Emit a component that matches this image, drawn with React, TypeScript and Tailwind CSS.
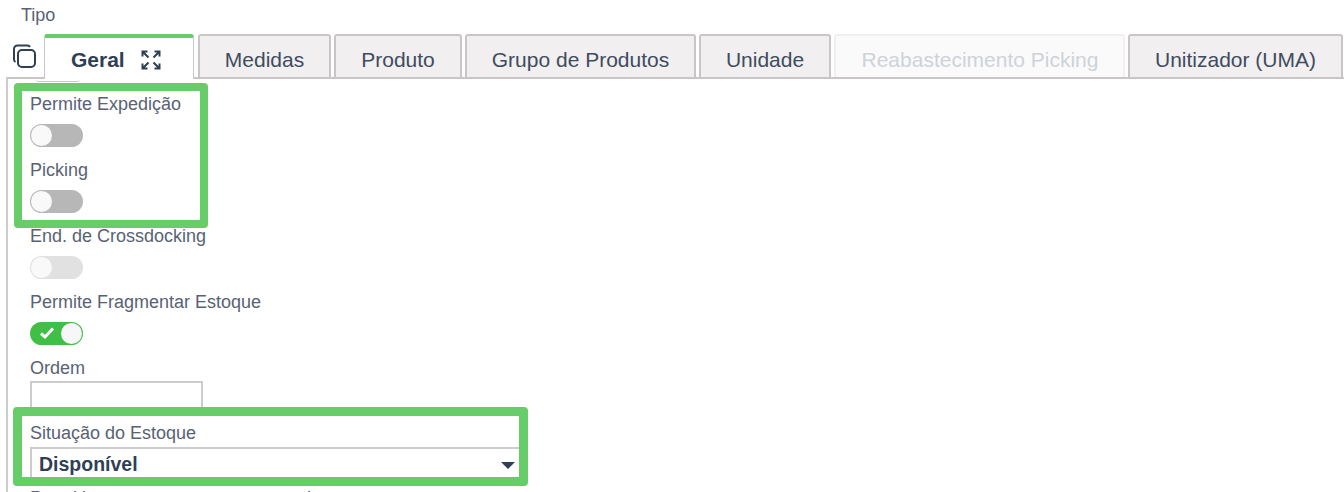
import React from "react";

const Tab = ({ label, w, disabled }: { label: string; w: string; disabled?: boolean }) => (
  <div
    className={
      disabled
        ? `${w} h-[44px] shrink-0 rounded-t-[3px] border-2 border-b-0 border-[#f1f0ef] bg-[#fafafa] text-[#ced2d9] flex items-center justify-center pt-[6px] pl-[1px]`
        : `${w} h-[44px] shrink-0 rounded-t-[3px] border-2 border-b-0 border-[#cbc6c6] bg-[#f1efef] text-[#3f4c60] flex items-center justify-center pt-[6px]`
    }
  >
    {label}
  </div>
);

const Toggle = ({ state }: { state: "off" | "disabled" | "on" }) => {
  if (state === "on") {
    return (
      <div className="w-[53px] h-[23px] rounded-full bg-[#3fbf45] flex items-center justify-end pr-[1px] relative">
        <svg width="16" height="14" viewBox="0 0 16 14" className="absolute left-[9px] top-[4px]">
          <path d="M2 7.5 L6 11 L14 2.5" fill="none" stroke="#fff" strokeWidth="3" />
        </svg>
        <div className="w-[21px] h-[21px] rounded-full bg-[#f7f7f7]" />
      </div>
    );
  }
  return (
    <div
      className={
        state === "off"
          ? "w-[53px] h-[23px] rounded-full bg-[#b7b7b7] flex items-center pl-[1px]"
          : "w-[53px] h-[23px] rounded-full bg-[#e1e1e1] flex items-center pl-[1px]"
      }
    >
      <div className="w-[21px] h-[21px] rounded-full bg-[#f9f9f9]" />
    </div>
  );
};

const Field = ({ label, state }: { label: string; state: "off" | "disabled" | "on" }) => (
  <div className="h-[66px]">
    <div className="h-[24px] leading-[24px] text-[#586274]">{label}</div>
    <div className="mt-[8px]">
      <Toggle state={state} />
    </div>
  </div>
);

export default function App() {
  return (
    <div className="relative h-[492px] w-[1344px] overflow-hidden bg-white font-['Liberation_Sans',Arial,sans-serif] text-[18px]">
      <div className="h-[34px] pl-[21px] pt-[3px] leading-[24px] text-[#586274]">Tipo</div>

      <div className="flex items-end h-[44px] text-[21px] relative">
        <div className="w-[44px] shrink-0 pl-[12px] pb-[9px] self-end">
          <svg width="25" height="25" viewBox="0 0 25 25" fill="none" stroke="#2f3f55" strokeWidth="2">
            <rect x="6" y="6" width="17" height="17" rx="4" />
            <path d="M3.5 18 A3 3 0 0 1 2 15.5 V5 A3.5 3.5 0 0 1 5.5 1.5 H15.5 A3 3 0 0 1 18 3" />
          </svg>
        </div>
        <div className="w-[150px] h-[45px] mb-[-1px] shrink-0 relative z-10 bg-white border-x border-[#cbc6c6] border-t-[4px] border-t-[#66cd68] rounded-t-[3px] flex items-center pl-[26px] pt-[3px] text-[#2f3f55] font-bold">
          <span>Geral</span>
          <svg width="20" height="20" viewBox="0 0 20 20" className="ml-[16px]" fill="none" stroke="#2f3f55" strokeWidth="2">
            <path d="M1.5 6.5 V1.5 H6.5 M1.5 1.5 L7.5 7.5 M13.5 1.5 H18.5 V6.5 M18.5 1.5 L12.5 7.5 M1.5 13.5 V18.5 H6.5 M1.5 18.5 L7.5 12.5 M13.5 18.5 H18.5 V13.5 M18.5 18.5 L12.5 12.5" />
          </svg>
        </div>
        <div className="flex gap-[3px] ml-[4px]">
          <Tab label="Medidas" w="w-[133px]" />
          <Tab label="Produto" w="w-[128px]" />
          <Tab label="Grupo de Produtos" w="w-[231px]" />
          <Tab label="Unidade" w="w-[132px]" />
          <Tab label="Reabastecimento Picking" w="w-[291px]" disabled />
          <Tab label="Unitizador (UMA)" w="w-[215px]" />
        </div>
      </div>

      <div className="ml-[6px] border-l-2 border-t-2 border-l-[#cccccc] border-t-[#cbc6c6] pl-[22px] mt-[-1px] relative">
        <div className="absolute left-[28px] top-0 w-[44px] h-[3px] rounded-b-full border-b border-[#cbc6c6]" />
        <div className="pt-[13px]">
          <Field label="Permite Expedição" state="off" />
          <Field label="Picking" state="off" />
          <Field label="End. de Crossdocking" state="disabled" />
          <Field label="Permite Fragmentar Estoque" state="on" />
          <div className="h-[65px]">
            <div className="h-[24px] leading-[24px] text-[#586274]">Ordem</div>
            <div className="w-[173px] h-[32px] mt-[1px] border-2 border-[#cccccc]" />
          </div>
          <div className="h-[65px]">
            <div className="h-[24px] leading-[24px] text-[#586274]">Situação do Estoque</div>
            <div className="w-[495px] h-[32px] border-2 border-b-0 border-[#cccccc] flex items-center pl-[7px] pt-[1px] mt-[2px] font-bold text-[19.5px] text-[#2f3f55]">
              Disponível
            </div>
          </div>
          <div className="leading-[24px] text-[#586274]">Permitir armazenamento em um misto</div>
        </div>
      </div>

      <div className="absolute left-[14px] top-[83px] w-[194px] h-[145px] border-[8px] border-[#66cd68] rounded-[4px]" />
      <div className="absolute left-[13px] top-[407px] w-[515px] h-[79px] border-[9px] border-[#66cd68] rounded-[4px] bg-transparent" />
      <div className="absolute left-[501px] top-[462px] w-0 h-0 border-x-[7px] border-x-transparent border-t-[7px] border-t-[#2f3f55]" />
    </div>
  );
}
